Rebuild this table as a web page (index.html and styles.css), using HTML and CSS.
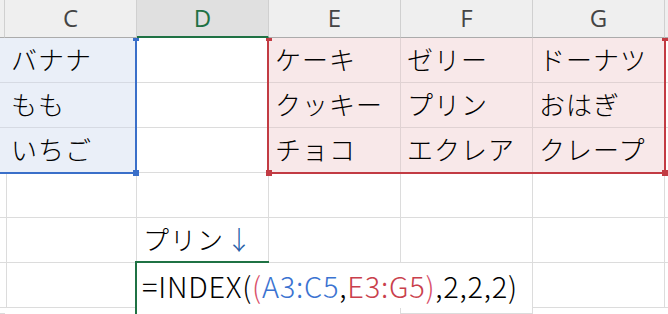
FILE: index.html
```html
<!DOCTYPE html>
<html lang="ja">
<head>
<meta charset="utf-8">
<link rel="stylesheet" href="styles.css">
</head>
<body>
<div class="sheet">
  <div class="grid">
    <div class="hd edge"></div>
    <div class="hd">C</div>
    <div class="hd active">D</div>
    <div class="hd">E</div>
    <div class="hd">F</div>
    <div class="hd">G</div>
    <div class="hd edge-r"></div>

    <div class="c blue"></div>
    <div class="c blue">バナナ</div>
    <div class="c"></div>
    <div class="c red">ケーキ</div>
    <div class="c red">ゼリー</div>
    <div class="c red">ドーナツ</div>
    <div class="c"></div>

    <div class="c blue"></div>
    <div class="c blue">もも</div>
    <div class="c"></div>
    <div class="c red">クッキー</div>
    <div class="c red">プリン</div>
    <div class="c red">おはぎ</div>
    <div class="c"></div>

    <div class="c blue"></div>
    <div class="c blue">いちご</div>
    <div class="c"></div>
    <div class="c red">チョコ</div>
    <div class="c red">エクレア</div>
    <div class="c red">クレープ</div>
    <div class="c"></div>

    <div class="c"></div>
    <div class="c"></div>
    <div class="c"></div>
    <div class="c"></div>
    <div class="c"></div>
    <div class="c"></div>
    <div class="c"></div>

    <div class="c"></div>
    <div class="c"></div>
    <div class="c">プリン<span class="arrow">↓</span></div>
    <div class="c"></div>
    <div class="c"></div>
    <div class="c"></div>
    <div class="c"></div>

    <div class="c"></div>
    <div class="c"></div>
    <div class="c editor"><span class="formula">=INDEX(<span class="paren">(</span><span class="ref-b">A3:C5</span>,<span class="ref-r">E3:G5</span><span class="paren">)</span>,2,2,2)</span></div>
    <div class="c"></div>

    <div class="c"></div>
    <div class="c"></div>
    <div class="c editor-tail"></div>
    <div class="c"></div>
  </div>

  <div class="range range-blue"></div>
  <div class="range range-red"></div>
  <div class="handle h-blue h-b-tr"></div>
  <div class="handle h-blue h-b-br"></div>
  <div class="handle h-red h-r-tl"></div>
  <div class="handle h-red h-r-tr"></div>
  <div class="handle h-red h-r-bl"></div>
  <div class="handle h-red h-r-br"></div>
  <div class="selframe"></div>
</div>
</body>
</html>
```

FILE: styles.css
```css
html, body {
  margin: 0;
  padding: 0;
  background: #ffffff;
}
body {
  width: 668px;
  height: 314px;
  overflow: hidden;
  font-family: "Noto Sans CJK JP", "Noto Sans", sans-serif;
}
.sheet {
  position: relative;
  width: 668px;
  height: 314px;
  overflow: hidden;
}
.grid {
  display: grid;
  grid-template-columns: 5px repeat(5, 132px) 1fr;
  grid-template-rows: 38px repeat(6, 45px) 1fr;
  height: 314px;
}
.hd {
  position: relative;
  z-index: 4;
  background: #efefef;
  border-right: 1px solid #d0d0d0;
  border-bottom: 1px solid #ababab;
  box-sizing: border-box;
  display: flex;
  align-items: center;
  justify-content: center;
  font-family: "Open Sans", "Noto Sans", sans-serif;
  font-size: 24px;
  color: #444444;
  padding-bottom: 3px;
}
.hd.edge-r { border-right: none; }
.hd.active {
  background: #e0e0e0;
  color: #1f7244;
  border-bottom: 2px solid #1f7244;
  padding-bottom: 2px;
}
.c {
  box-sizing: border-box;
  border-right: 1px solid #dcdcdc;
  border-bottom: 1px solid #dcdcdc;
  display: flex;
  align-items: center;
  padding: 0 0 3px 6px;
  font-size: 26px;
  font-weight: 300;
  letter-spacing: 1px;
  color: #000000;
  white-space: nowrap;
  overflow: visible;
}
.c.blue {
  background: #eaeff8;
  border-color: #d6dae3;
}
.c.red {
  background: #f8e8e9;
  border-color: #e0d2d3;
}
.arrow {
  color: #2a5fa8;
  font-weight: 300;
  margin-left: 2px;
}
.editor {
  grid-column: span 3;
  background: #ffffff;
  border-right: 1px solid #dcdcdc;
  border-bottom: none;
  position: relative;
  z-index: 2;
  padding-left: 5px;
  padding-bottom: 2px;
  letter-spacing: 0;
}
.editor-tail {
  grid-column: span 3;
  background: #ffffff;
  border-bottom: none;
}
.formula {
  font-size: 29px;
  font-weight: 300;
  letter-spacing: 0.75px;
  color: #000000;
}
.paren { color: #d9506a; }
.ref-b { color: #3b73d1; }
.ref-r { color: #c9404c; }

.range {
  position: absolute;
  box-sizing: border-box;
  z-index: 3;
  pointer-events: none;
}
.range-blue {
  left: -10px;
  top: 36px;
  width: 147px;
  height: 138px;
  border: 2px solid #3a6fc9;
}
.range-red {
  left: 267px;
  top: 36px;
  width: 399px;
  height: 138px;
  border: 2px solid #c23b43;
}
.handle {
  position: absolute;
  z-index: 5;
  width: 6px;
  height: 6px;
}
.h-blue { background: #3a6fc9; }
.h-red { background: #c23b43; }
.h-b-tr { left: 133px; top: 38px; height: 3px; }
.h-b-br { left: 133px; top: 170px; }
.h-r-tl { left: 266px; top: 38px; height: 3px; }
.h-r-tr { left: 662px; top: 38px; height: 3px; }
.h-r-bl { left: 266px; top: 170px; }
.h-r-br { left: 662px; top: 170px; }
.selframe {
  position: absolute;
  z-index: 6;
  left: 135px;
  top: 261px;
  width: 134px;
  height: 60px;
  box-sizing: border-box;
  border-top: 2px solid #1f7244;
  border-left: 2px solid #1f7244;
}
```
